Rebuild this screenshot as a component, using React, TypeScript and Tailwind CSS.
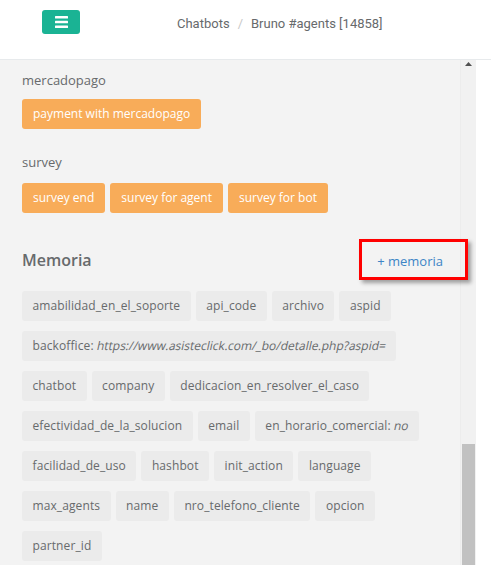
import React from "react";

type Chip = { k: string; v?: string };

const sections = [
  { label: "mercadopago", items: ["payment with mercadopago"] },
  { label: "survey", items: ["survey end", "survey for agent", "survey for bot"] },
];

const memoria: Chip[] = [
  { k: "amabilidad_en_el_soporte" },
  { k: "api_code" },
  { k: "archivo" },
  { k: "aspid" },
  { k: "backoffice", v: "https://www.asisteclick.com/_bo/detalle.php?aspid=" },
  { k: "chatbot" },
  { k: "company" },
  { k: "dedicacion_en_resolver_el_caso" },
  { k: "efectividad_de_la_solucion" },
  { k: "email" },
  { k: "en_horario_comercial", v: "no" },
  { k: "facilidad_de_uso" },
  { k: "hashbot" },
  { k: "init_action" },
  { k: "language" },
  { k: "max_agents" },
  { k: "name" },
  { k: "nro_telefono_cliente" },
  { k: "opcion" },
  { k: "partner_id" },
];

export default function App() {
  return (
    <div
      className="relative h-[565px] w-[491px] overflow-hidden bg-white flex flex-col"
      style={{ fontFamily: '"Open Sans", "Liberation Sans", sans-serif' }}
    >
      {/* ── Header ── */}
      <header className="h-[60px] flex-shrink-0 flex items-start border-b border-[#e7eaec] bg-white">
        <button className="ml-[42px] mt-[10px] w-[38px] h-[24px] rounded-[3px] bg-[#1ab394] flex items-center justify-center">
          <svg width="13" height="12" viewBox="0 0 13 12" fill="#fff">
            <rect x="0" y="0" width="13" height="2.4" rx="0.5" />
            <rect x="0" y="4.8" width="13" height="2.4" rx="0.5" />
            <rect x="0" y="9.6" width="13" height="2.4" rx="0.5" />
          </svg>
        </button>
        <nav
          className="ml-[97px] mt-[15px] text-[13px] leading-[18px] text-[#676a6c] flex"
          style={{ fontFamily: 'Roboto, "Liberation Sans", sans-serif' }}
        >
          <span>Chatbots</span>
          <span className="px-[8px] text-[#c8c8c8]">/</span>
          <span>Bruno #agents [14858]</span>
        </nav>
      </header>

      {/* ── Body ── */}
      <div className="flex-1 flex min-h-0">
        <main className="w-[460px] bg-[#f3f3f3] px-[22px] pt-[10px] overflow-hidden">
          {sections.map((s, i) => (
            <div key={s.label} className={i === 0 ? "" : "mt-[23px]"}>
              <p className="text-[13px] leading-[20px] text-[#676a6c]">{s.label}</p>
              <div className={`flex flex-wrap gap-[5px] ${i === 0 ? "mt-[9px]" : "mt-[11px]"}`}>
                {s.items.map((t) => (
                  <span
                    key={t}
                    className="h-[30px] px-[11px] flex items-center rounded-[3px] bg-[#f8ac59] text-white text-[12px]"
                  >
                    {t}
                  </span>
                ))}
              </div>
            </div>
          ))}

          {/* Memoria */}
          <div className="mt-[36px] flex items-baseline justify-between -mr-[5px]">
            <h3 className="text-[16px] leading-[22px] font-semibold text-[#676a6c]">Memoria</h3>
            <a className="text-[13px] text-[#3d85c6]">+ memoria</a>
          </div>

          <div className="mt-[19px] flex flex-wrap gap-x-[5px] gap-y-[10px]">
            {memoria.map((c) => (
              <span
                key={c.k}
                className="h-[30px] px-[10.5px] flex items-center rounded-[3px] bg-[#ebebeb] text-[#676a6c] text-[12px] tracking-[0.1px] whitespace-nowrap"
              >
                {c.k}
                {c.v && (
                  <>
                    :&nbsp;<span className="inline-block -skew-x-12 tracking-normal">{c.v}</span>
                  </>
                )}
              </span>
            ))}
          </div>
        </main>

        {/* Scrollbar */}
        <div className="w-[16px] bg-[#f1f1f1] flex flex-col items-center border-l border-[#ececec]">
          <svg width="7" height="4" viewBox="0 0 7 4" className="mt-[2px]">
            <polygon points="3.5,0 7,4 0,4" fill="#505050" />
          </svg>
          <div className="flex-1" />
          <div className="w-[13px] h-[121px] bg-[#c1c1c1]" />
        </div>
        <div className="flex-1 bg-white" />
      </div>

      {/* Annotation box */}
      <div className="absolute left-[359px] top-[239px] w-[109px] h-[41px] border-[3px] border-[#ff0000] shadow-[3px_3px_4px_rgba(0,0,0,0.35)]" />
    </div>
  );
}
